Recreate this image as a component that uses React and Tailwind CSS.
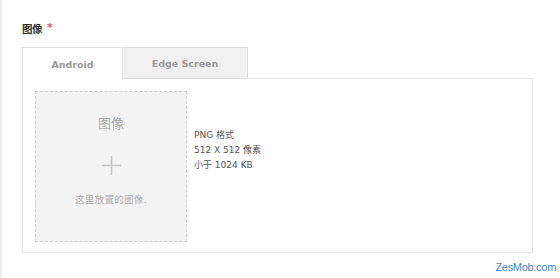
import React from 'react'

const font = { fontFamily: '"DejaVu Sans", "Noto Sans CJK SC", sans-serif' }

const tabs = [
  { label: 'Android', active: true },
  { label: 'Edge Screen', active: false },
]

export default function App() {
  return (
    <div
      className="relative w-[560px] h-[278px] bg-white border-l-2 border-[#f0f0f0] pl-[20px] pt-[21px] overflow-hidden"
      style={font}
    >
      {/* Field label */}
      <div className="flex items-start h-[16px]">
        <span className="text-[10.5px] font-bold text-[#333] leading-[16px] tracking-[-0.5px]">图像</span>
        <span className="ml-[5px] text-[11px] font-bold text-[#e85a5a] leading-[14px]">*</span>
      </div>

      {/* Tabs */}
      <div className="flex mt-[10px] h-[32px]">
        {tabs.map((tab) =>
          tab.active ? (
            <div
              key={tab.label}
              className="relative z-10 w-[101px] h-[33px] pt-[3px] bg-white border border-b-0 border-[#e3e3e3] flex items-center justify-center text-[9.5px] font-bold text-[#9a9a9a]"
            >
              {tab.label}
            </div>
          ) : (
            <div
              key={tab.label}
              className="w-[125px] h-[32px] pt-[3px] bg-[#f0f0f0] border border-l-0 border-[#dcdcdc] flex items-center justify-center text-[9.5px] font-bold text-[#9a9a9a]"
            >
              {tab.label}
            </div>
          )
        )}
      </div>

      {/* Panel */}
      <div className="w-[511px] h-[175px] -mt-px border border-[#e8e8e8] pl-[12px] pt-[12px] flex">
        <div className="w-[152px] h-[151px] bg-[#f3f3f3] border border-dashed border-[#cfcfcf] flex flex-col items-center">
          <div className="mt-[24px] text-[13px] leading-[16px] text-[#aaa]">图像</div>
          <svg className="mt-[24px]" width="19" height="19" viewBox="0 0 19 19">
            <path d="M9.5 0v19M0 9.5h19" stroke="#c8c8c8" strokeWidth="1.5" fill="none" />
          </svg>
          <div className="mt-[19px] text-[9.5px] leading-[12px] text-[#b0b0b0] tracking-[0.3px]">这里放置的图像.</div>
        </div>
        <div className="ml-[7px] pt-[37px] text-[9px] leading-[15px] text-[#555]">
          <div>PNG 格式</div>
          <div>512 X 512 像素</div>
          <div>小于 1024 KB</div>
        </div>
      </div>

      {/* Watermark */}
      <div
        className="absolute right-[4px] bottom-[3px] text-[11px] text-[#3a8ad6] tracking-[-0.3px]"
        style={{ fontFamily: '"Liberation Sans", Arial, sans-serif' }}
      >
        ZesMob.com
      </div>
    </div>
  )
}
